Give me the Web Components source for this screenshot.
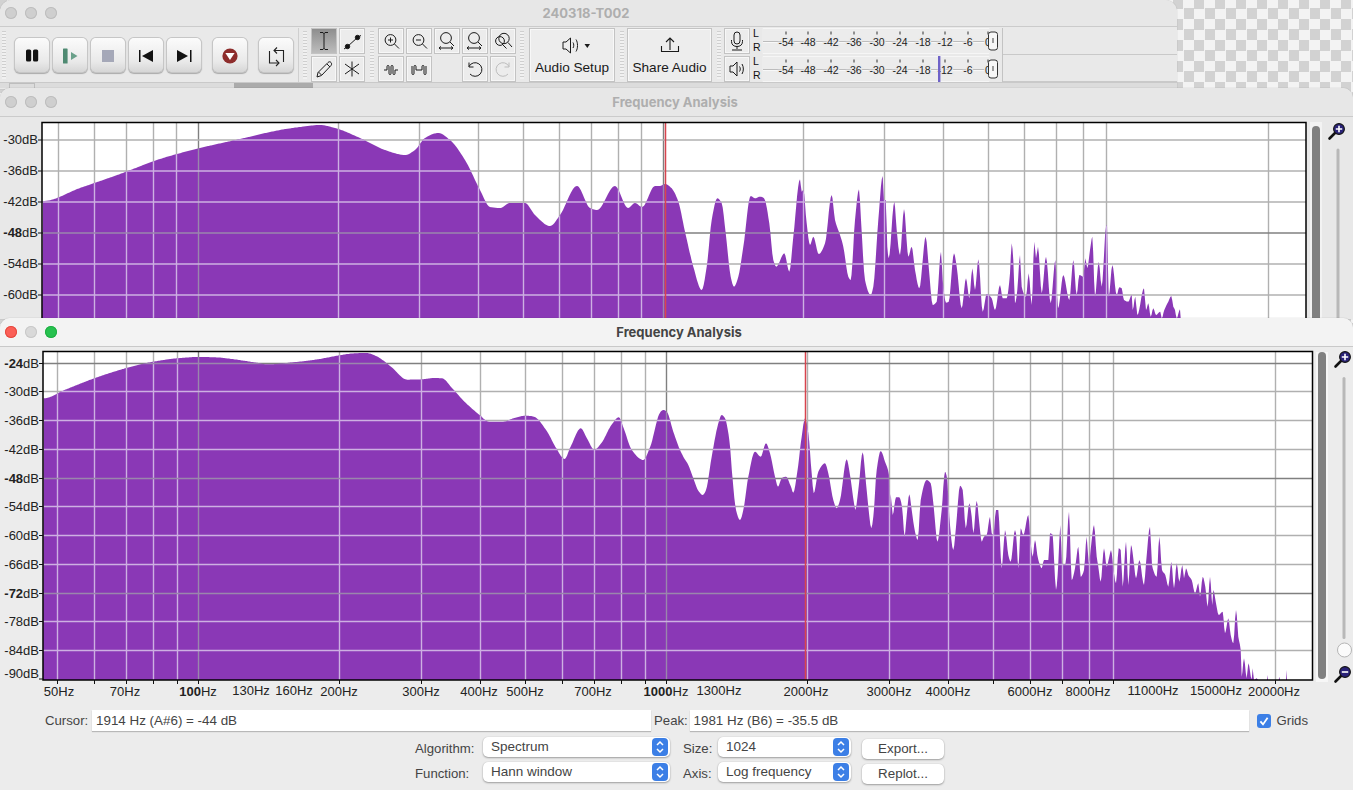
<!DOCTYPE html>
<html>
<head>
<meta charset="utf-8">
<title>Frequency Analysis</title>
<style>
  html, body { margin: 0; padding: 0; height: 790px; overflow: hidden; }
  body { font-family: "Liberation Sans", sans-serif; }
</style>
</head>
<body>
<app-desktop>
  <mac-window style="left:0;top:0;width:1177px;height:89px;z-index:1" label="240318-T002" tone="back" bar="27" shift="-62" corners="12px 12px 0 0">
    <project-toolbar></project-toolbar>
  </mac-window>
  <mac-window style="left:0;top:88px;width:1353px;height:231px;z-index:2" label="Frequency Analysis" tone="back" bar="29" shift="-60" corners="10px 10px 0 0">
    <div style="display:flex;align-items:flex-start">
      <spectrum-plot set="upper"></spectrum-plot>
      <zoom-rail set="upper"></zoom-rail>
    </div>
  </mac-window>
  <mac-window style="left:0;top:318px;width:1353px;height:472px;z-index:3" label="Frequency Analysis" tone="front" bar="29" shift="-52" corners="10px 10px 0 0">
    <div style="display:flex;align-items:flex-start">
      <spectrum-plot set="lower"></spectrum-plot>
      <zoom-rail set="lower"></zoom-rail>
    </div>
    <freq-controls></freq-controls>
  </mac-window>
</app-desktop>

<script>
  const ICONS = {
    zoomin: '<circle cx="12.5" cy="12" r="5.4"/><path d="M16.5 16l4.5 4.5M10 12h5M12.5 9.5v5"/>',
    zoomout: '<circle cx="12.5" cy="12" r="5.4"/><path d="M16.5 16l4.5 4.5M10 12h5"/>',
    fitsel: '<circle cx="12" cy="10" r="5.4"/><path d="M16 14l4 4M5 20h14M5 20l2-1.6M5 20l2 1.6M19 20l-2-1.6M19 20l-2 1.6"/>',
    fitproj: '<circle cx="12" cy="10" r="5.4"/><path d="M16 14l4 4M5 20h14M5 20l2-1.6M5 20l2 1.6M19 20l-2-1.6M19 20l-2 1.6"/>',
    zoomtoggle: '<circle cx="14" cy="10.5" r="5.2"/><circle cx="10" cy="13" r="4.4"/><path d="M18 14.5l4 4.5M13 17l3.5 3.5"/>',
    ibeam: '<path d="M13 5v16M9 4.5h3l1 1 1-1h3M9 21.5h3l1-1 1 1h3"/>',
    envelope: '<path d="M5 21l3-2 11-10 3-1.5"/><circle cx="8.5" cy="18.5" r="2.2" fill="#111"/><circle cx="18.5" cy="9.5" r="2.2" fill="#111"/>',
    pencil: '<path d="M6 21l1-4.5L17 6.5c1-1 2.2-1 3 0s.8 2 0 3L10.5 19.5z M7.5 16l3 3 M16 8l3 3"/>',
    multi: '<path d="M13 5.5v15M6 8l14 10M20 8L6 18"/>',
    silence: '<path d="M6 14H9V10.5a1 1 0 0 1 2 0V17.5a1 1 0 0 0 2 0V10.5a1 1 0 0 1 2 0V17.5a1 1 0 0 0 2 0V14H20"/>',
    trim: '<path d="M6 10V17.5a1 1 0 0 0 2 0V10.5a1 1 0 0 1 2 0V14H16V10.5a1 1 0 0 1 2 0V17.5a1 1 0 0 0 2 0V10"/>',
    undo: '<path d="M8 18a6.8 6.8 0 1 0-1-7.5M7 6.5v4.5h4.5" />',
    redo: '<path d="M18 18a6.8 6.8 0 1 1 1-7.5M19 6.5v4.5h-4.5" />',
    mic: '<rect x="10" y="4" width="6" height="12" rx="3"/><path d="M7.5 12v1.5c0 3.4 2.4 5 5.5 5s5.5-1.6 5.5-5V12M13 18.5V21M8 22h10"/>',
    speaker: '<path d="M6 10h3l4-4v14l-4-4H6zM15.5 10.5c1 1.5 1 3.5 0 5M18 8c1.8 3 1.8 7 0 10"/>'
  };

  const TRANSPORT = {
    pause: '<rect x="11" y="11.5" width="5.2" height="12" rx="1.6" fill="#111"/><rect x="18" y="11.5" width="5.2" height="12" rx="1.6" fill="#111"/>',
    play: '<rect x="10" y="10.5" width="4.6" height="15" rx=".6" fill="#4f8a72"/><path d="M18 14l6.5 4-6.5 4z" fill="#6aa08a"/>',
    stop: '<rect x="11" y="12" width="12" height="12" fill="#a5a8b8"/>',
    start: '<rect x="10" y="12" width="1.5" height="12" fill="#111"/><path d="M24 12v12l-11-6z" fill="#111"/>',
    end: '<rect x="23" y="12" width="1.5" height="12" fill="#111"/><path d="M10 12v12l11-6z" fill="#111"/>',
    record: '<circle cx="17" cy="18" r="7.6" fill="#8e2d2c"/><path d="M12.4 15.1h9.2L17 21.9z" fill="#fff"/>',
    loop: '<path d="M15 12.5h9.5V24M10.5 13v12H20" fill="none" stroke="#222" stroke-width="1.1"/><path d="M18 9.5l-3 3 3 3M17 22l3 3-3 3" fill="none" stroke="#222" stroke-width="1.1"/>'
  };

  class AppDesktop extends HTMLElement {
    constructor() {
      super();
      this.attachShadow({ mode: "open" });
      this.shadowRoot.innerHTML = `
        <style>
          :host {
            display: block;
            position: relative;
            width: 1353px;
            height: 790px;
            overflow: hidden;
            background: conic-gradient(#f3f3f3 25%, #d2d2d2 0 50%, #f3f3f3 0 75%, #d2d2d2 0) -3px -2px / 21px 21px;
          }
        </style>
        <slot></slot>`;
    }
  }

  class TrafficLights extends HTMLElement {
    constructor() {
      super();
      this.attachShadow({ mode: "open" });
    }
    connectedCallback() {
      const live = this.hasAttribute("live");
      this.shadowRoot.innerHTML = `
        <style>
          :host { display: flex; gap: 8px; align-items: center; }
          i { display: block; width: 12px; height: 12px; border-radius: 50%; background: #cfcfcf; box-shadow: inset 0 0 0 1px #bdbdbd; }
          .r { background: ${live ? "#fb5f57" : "#cfcfcf"}; box-shadow: inset 0 0 0 1px ${live ? "#e4493f" : "#bdbdbd"}; }
          .y { background: ${live ? "#d9d9d9" : "#cfcfcf"}; box-shadow: inset 0 0 0 1px ${live ? "#c8c8c8" : "#bdbdbd"}; }
          .g { background: ${live ? "#27c14f" : "#cfcfcf"}; box-shadow: inset 0 0 0 1px ${live ? "#1fae42" : "#bdbdbd"}; }
        </style>
        <i class="r"></i><i class="y"></i><i class="g"></i>`;
    }
  }

  class MacWindow extends HTMLElement {
    constructor() {
      super();
      this.attachShadow({ mode: "open" });
    }
    connectedCallback() {
      const front = this.getAttribute("tone") === "front";
      this.shadowRoot.innerHTML = `
        <style>
          :host {
            display: block;
            position: absolute;
            overflow: hidden;
            box-sizing: border-box;
            background: ${front ? "#ececec" : "#e8e8e8"};
            border-radius: ${this.getAttribute("corners")};
            box-shadow: 0 0 1px rgba(0,0,0,.35);
          }
          header {
            height: ${this.getAttribute("bar")}px;
            box-sizing: border-box;
            display: flex;
            align-items: center;
            padding-left: 5px;
            background: ${front ? "#f3f3f3" : "#e7e7e7"};
            border-bottom: 1px solid ${front ? "#c9c9c9" : "#cbcbcb"};
          }
          h1 {
            flex: 1;
            margin: 0 0 0 ${this.getAttribute("shift")}px;
            text-align: center;
            font: bold 13px "Inter", "Liberation Sans", sans-serif;
            color: ${front ? "#444" : "#aeaeae"};
          }
        </style>
        <header>
          <traffic-lights ${front ? "live" : ""}></traffic-lights>
          <h1>${this.getAttribute("label")}</h1>
        </header>
        <slot></slot>`;
    }
  }

  class GripBar extends HTMLElement {
    constructor() {
      super();
      this.attachShadow({ mode: "open" });
      this.shadowRoot.innerHTML = `
        <style>
          :host {
            display: block;
            width: 4px;
            height: 48px;
            align-self: center;
            background: repeating-linear-gradient(#cfcfcf 0 1px, #f1f1f1 1px 3px);
          }
        </style>`;
    }
  }

  class TransportBtn extends HTMLElement {
    constructor() {
      super();
      this.attachShadow({ mode: "open" });
    }
    connectedCallback() {
      this.shadowRoot.innerHTML = `
        <style>
          :host {
            display: block;
            width: 34px;
            height: 34px;
            border-radius: 5px;
            background: linear-gradient(#fbfbfb, #e9e9e9 70%, #d6d6d6);
            box-shadow: 0 0 0 1px #c6c6c6, 0 1px 1px 1px #aaa;
          }
          svg { display: block; }
        </style>
        <svg width="34" height="34" viewBox="0 0 34 34">${TRANSPORT[this.getAttribute("icon")]}</svg>`;
    }
  }

  class ToolBtn extends HTMLElement {
    constructor() {
      super();
      this.attachShadow({ mode: "open" });
    }
    connectedCallback() {
      const pressed = this.hasAttribute("pressed");
      const off = this.hasAttribute("off");
      this.shadowRoot.innerHTML = `
        <style>
          :host {
            display: block;
            width: 26px;
            height: 26px;
            box-sizing: border-box;
            border: 1px solid #c3c3c3;
            background: ${pressed ? "linear-gradient(#8e8e8e, #bdbdbd)" : "#ececec"};
            box-shadow: inset 0 0 0 1px ${pressed ? "transparent" : "#f7f7f7"};
          }
          svg { display: block; margin: -1px; fill: none; stroke: ${off ? "#bdbdbd" : "#1a1a1a"}; stroke-width: 1; }
        </style>
        <svg width="26" height="26" viewBox="0 0 26 26">${ICONS[this.getAttribute("icon")]}</svg>`;
    }
  }

  class LevelMeter extends HTMLElement {
    constructor() {
      super();
      this.attachShadow({ mode: "open" });
    }
    connectedCallback() {
      const marks = [[-54,786],[-48,808],[-42,831],[-36,854],[-30,877],[-24,900],[-18,923],[-12,945],[-6,968],[0,988]];
      const ox = 753;
      let ticks = "";
      marks.forEach(([v, x]) => {
        ticks += `<path d="M${x-ox} 3.5v3" stroke="#333" stroke-width="1"/>`;
        ticks += `<text x="${x-ox}" y="17.5" text-anchor="middle">${v}</text>`;
      });
      const needle = this.hasAttribute("needle") ? `<rect x="${939-ox-1}" y="0" width="2.4" height="26" fill="#6e62c8"/>` : "";
      this.shadowRoot.innerHTML = `
        <style>
          :host { display: block; width: 247px; height: 26px; }
          svg { display: block; }
          text { font: 10.5px "Liberation Sans", sans-serif; fill: #222; stroke: #e9e9e9; stroke-width: 2.5px; paint-order: stroke; }
          .lr { stroke: none; font-size: 10.5px; fill: #111; }
        </style>
        <svg width="247" height="26" viewBox="0 0 247 26">
          <rect x="9" y="0" width="228" height="26" fill="#ececec"/>
          <path d="M10 .5h226M10 25.5h226" stroke="#f6f6f6"/>
          <path d="M10 13.5h226" stroke="#bcbcbc"/>
          <path d="M10 14.5h226" stroke="#f8f8f8"/>
          <text class="lr" x="0" y="9">L</text>
          <text class="lr" x="0" y="23">R</text>
          ${ticks}
          ${needle}
          <rect x="235.5" y="4" width="9" height="18" rx="2.5" fill="#f6f6f6" stroke="#333" stroke-width="1"/>
          <path d="M240 10v5" stroke="#777" stroke-width="1.4"/>
        </svg>`;
    }
  }

  class ProjectToolbar extends HTMLElement {
    constructor() {
      super();
      this.attachShadow({ mode: "open" });
      this.shadowRoot.innerHTML = `
        <style>
          :host { display: block; height: 61px; }
          .row { display: flex; height: 56px; border-bottom: 1px solid #c9c9c9; box-sizing: border-box; padding-top: 1px; background: #e9e9e9; }
          .transport { display: flex; gap: 4px; align-items: center; margin: 2px 0 0 9px; height: 49px; }
          .grid { display: grid; grid-template-columns: repeat(2, 26px); grid-auto-rows: 26px; gap: 2px; }
          .five { grid-template-columns: repeat(5, 26px); }
          .blank { width: 26px; height: 26px; }
          .big {
            box-sizing: border-box;
            height: 54px;
            border: 1px solid #c3c3c3;
            background: #ededed;
            box-shadow: inset 0 0 0 1px #f8f8f8;
            display: flex;
            flex-direction: column;
            align-items: center;
            font-size: 13.6px;
            color: #1a1a1a;
          }
          .big svg { fill: none; stroke: #1a1a1a; stroke-width: 1; display: block; }
          .meters { display: grid; grid-auto-rows: 26px; gap: 2px; }
          .rest { flex: 1; margin-left: 2px; border-left: 1px solid #c3c3c3; display: flex; flex-direction: column; }
          .rest i { display: block; height: 27px; border-bottom: 1px solid #c9c9c9; box-sizing: border-box; }
          .sep { width: 1px; height: 54px; background: #cfcfcf; margin-left: 5px; }
          .bottom { height: 5px; background: #dcdcdc; display: flex; }
          .stub { width: 26px; height: 5px; margin-left: 9px; box-sizing: border-box; border: 1px solid #bdbdbd; border-bottom: 0; }
          .thumb { width: 79px; height: 5px; margin-left: 199px; background: #ababab; }
        </style>
        <div class="row">
          <grip-bar style="margin-left:2px"></grip-bar>
          <div class="transport">
            <transport-btn icon="pause"></transport-btn>
            <transport-btn icon="play"></transport-btn>
            <transport-btn icon="stop"></transport-btn>
            <transport-btn icon="start"></transport-btn>
            <transport-btn icon="end"></transport-btn>
            <transport-btn icon="record" style="margin-left:8px"></transport-btn>
            <transport-btn icon="loop" style="margin-left:8px"></transport-btn>
          </div>
          <div class="sep"></div>
          <grip-bar style="margin-left:4px"></grip-bar>
          <div class="grid" style="margin-left:4px">
            <tool-btn icon="ibeam" pressed></tool-btn>
            <tool-btn icon="envelope"></tool-btn>
            <tool-btn icon="pencil"></tool-btn>
            <tool-btn icon="multi"></tool-btn>
          </div>
          <grip-bar style="margin-left:5px"></grip-bar>
          <div class="grid five" style="margin-left:4px">
            <tool-btn icon="zoomin"></tool-btn>
            <tool-btn icon="zoomout"></tool-btn>
            <tool-btn icon="fitsel"></tool-btn>
            <tool-btn icon="fitproj"></tool-btn>
            <tool-btn icon="zoomtoggle"></tool-btn>
            <tool-btn icon="silence"></tool-btn>
            <tool-btn icon="trim"></tool-btn>
            <div class="blank"></div>
            <tool-btn icon="undo"></tool-btn>
            <tool-btn icon="redo" off></tool-btn>
          </div>
          <grip-bar style="margin-left:4px"></grip-bar>
          <div class="big" style="width:86px;margin-left:5px">
            <svg width="50" height="30" viewBox="0 0 50 30">
              <path d="M16 13h3l4.5-4v15L19 20h-3zM26 13.5c1 1.5 1 4 0 5.5M29 10.5c2 3 2 9 0 12"/>
              <path d="M37.5 15h5.5l-2.7 4z" fill="#1a1a1a" stroke="none"/>
            </svg>
            <span style="margin-top:1px">Audio Setup</span>
          </div>
          <grip-bar style="margin-left:5px"></grip-bar>
          <div class="big" style="width:85px;margin-left:3px">
            <svg width="40" height="31" viewBox="0 0 40 31">
              <path d="M20 21V9M16 13l4-4 4 4M11.5 17v5.5h17V17" stroke-width="1.1"/>
            </svg>
            <span>Share Audio</span>
          </div>
          <grip-bar style="margin-left:5px"></grip-bar>
          <div class="grid" style="grid-template-columns:26px;margin-left:3px">
            <tool-btn icon="mic"></tool-btn>
            <tool-btn icon="speaker"></tool-btn>
          </div>
          <div class="meters" style="margin-left:3px">
            <level-meter></level-meter>
            <level-meter needle></level-meter>
          </div>
          <div class="rest"><i></i><i></i></div>
        </div>
        <div class="bottom"><div class="stub"></div><div class="thumb"></div></div>`;
    }
  }

  // traces of the two spectra, in page pixels
  const scale = (pts, ox, oy, sx, sy) => pts.map(([x, y]) => [ox + x / sx, oy + y / sy]);

  // monotone cubic through the traced points, so peaks come out round and spikes don't overshoot
  const smooth = pts => {
    const m = pts.map((p, i) => {
      if (i === 0 || i === pts.length - 1) return 0;
      const a = (p[1] - pts[i - 1][1]) / (p[0] - pts[i - 1][0]);
      const b = (pts[i + 1][1] - p[1]) / (pts[i + 1][0] - p[0]);
      return a * b <= 0 ? 0 : 2 * a * b / (a + b);
    });
    const out = [];
    for (let i = 0; i < pts.length - 1; i++) {
      const [x0, y0] = pts[i], [x1, y1] = pts[i + 1];
      const h = x1 - x0;
      const steps = Math.max(1, Math.ceil(h));
      for (let s = 0; s < steps; s++) {
        const t = s / steps, t2 = t * t, t3 = t2 * t;
        out.push([x0 + h * t,
          (2 * t3 - 3 * t2 + 1) * y0 + (t3 - 2 * t2 + t) * h * m[i] +
          (3 * t2 - 2 * t3) * y1 + (t3 - t2) * h * m[i + 1]]);
      }
    }
    out.push(pts[pts.length - 1]);
    return out;
  };

  const lowerTrace = [].concat(
    scale([[9,160],[60,135],[133,100],[209,70],[278,50],[335,40],[388,36],[430,37],[470,42],[530,53],[558,58],[620,52],[680,43],[733,31],[770,25],[800,24],[825,34],[860,65],[900,104],[935,103],[965,99],[985,100],[1010,130],[1040,170],[1077,210],[1100,230],[1135,230],[1160,220],[1190,212],[1210,215],[1240,255],[1265,310],[1285,342],[1300,305],[1325,250],[1340,280],[1358,314],[1375,295],[1400,240],[1418,217],[1430,250],[1450,315],[1478,345],[1495,305]], 40, 345, 2.45, 3),
    scale([[0,38],[10,30],[20,35],[40,95],[60,150],[70,170],[85,195],[100,235],[115,272],[128,285],[138,270],[155,170],[175,70],[185,45],[195,55],[208,120],[218,240],[228,330],[240,360],[250,330],[265,230],[285,155],[302,170],[318,130],[330,160],[345,230],[354,260],[365,235],[378,230],[392,258],[400,278],[412,215],[425,110],[435,55],[445,100],[455,220],[461,280],[475,215],[495,190],[505,220],[520,300],[530,325],[540,300],[560,178],[570,225],[582,310],[586,330],[595,270],[608,157],[618,250],[625,320],[634,385],[640,350],[650,210],[662,153],[675,185],[687,225],[690,350],[692,282],[698,345],[708,292],[718,292],[726,320],[734,410],[738,370],[748,283],[755,330],[765,395],[773,420],[782,300],[800,240],[812,250],[822,330],[832,425],[845,330],[855,215],[862,240],[868,350],[880,450],[888,380],[900,257],[908,270],[917,385],[928,310],[935,350],[940,400],[950,302],[958,370],[965,425],[972,410],[980,405],[990,350]], 660, 400, 3, 3),
    scale([[35,100],[40,105],[48,30],[55,30],[60,120],[65,205],[72,120],[75,90],[85,165],[92,185],[105,90],[108,100],[115,205],[122,85],[130,105],[145,45],[152,130],[158,170],[165,120],[172,165],[178,190],[185,205],[192,180],[205,180],[210,100],[218,105],[222,175],[228,270],[235,190],[241,75],[246,190],[256,195],[267,35],[275,240],[285,205],[295,140],[302,230],[312,210],[320,110],[326,190],[335,120],[342,75],[350,170],[355,200],[362,245],[372,145],[380,200],[388,170],[393,150],[400,205],[408,250],[416,145],[422,150],[428,260],[438,125],[445,255],[453,135],[460,175],[468,235],[478,180],[492,255],[498,190],[510,80],[516,195],[530,230],[538,110],[546,210],[556,225],[565,260],[574,185],[582,265],[590,190],[598,245],[607,195],[612,235],[618,205],[625,225],[635,240],[645,280],[655,250],[660,290],[668,230],[676,260],[683,320],[690,230],[697,315],[700,270],[708,310],[716,345],[728,335],[735,400],[745,355],[752,405],[760,430],[768,330],[775,410],[782,450],[785,530],[792,475],[800,535],[805,490],[815,538],[818,505],[822,540],[830,535],[835,540],[861,540],[862,525],[864,540],[896,540],[898,530],[900,540],[918,540],[919,510],[921,540]], 980, 500, 3, 3)
  );

  const upperTrace = [].concat(
    [[43,201],[80,188],[120,174],[160,159],[200,148],[240,139],[280,130],[300,127],[320,125],[335,128],[360,138],[385,150],[405,155],[415,150],[425,138],[438,133],[450,140],[465,160],[480,190],[490,207],[500,208],[510,203],[525,203],[535,215],[550,226],[560,215],[577,186],[590,208],[597,210],[615,186],[628,208],[635,203],[642,207],[655,186]],
    scale([[0,198],[15,192],[35,205],[55,245],[75,335],[100,440],[125,510],[140,440],[155,300],[172,235],[185,250],[197,340],[212,470],[222,500],[235,470],[250,380],[272,228],[285,235],[300,230],[312,235],[328,310],[340,420],[349,440],[373,400],[388,455],[400,350],[420,178],[425,215],[430,210],[440,310],[450,375],[460,350],[476,402],[495,370],[515,225],[525,300],[540,345],[550,380],[565,470],[572,480],[585,300],[597,208],[603,300],[615,480],[632,525],[640,500],[655,300],[668,168],[672,240],[677,240],[682,380],[686,415],[703,245],[710,330],[720,405],[732,267],[745,410],[755,380],[765,450],[778,505],[797,350],[806,440],[818,555],[830,545],[843,395],[848,480],[858,548],[866,545],[882,400],[890,440],[905,565],[918,475],[928,535],[937,445],[945,510],[955,418],[968,575],[980,522],[995,535],[1005,570],[1020,495]], 660, 120, 3, 3),
    scale([[68,325],[80,325],[90,250],[95,160],[100,210],[105,340],[112,300],[120,195],[125,290],[138,320],[146,250],[155,345],[163,155],[168,205],[174,170],[185,310],[198,200],[212,340],[226,210],[234,355],[250,255],[268,330],[280,210],[290,315],[298,255],[310,260],[316,205],[322,235],[330,180],[337,140],[345,320],[356,215],[365,290],[378,110],[381,105],[386,320],[397,225],[410,315],[418,292],[425,295],[432,330],[445,335],[455,315],[458,360],[466,320],[472,375],[492,295],[498,360],[505,340],[512,380],[520,355],[528,375],[541,365],[545,385],[553,360],[565,335],[574,318],[580,350],[585,360],[590,385],[600,358],[602,385]], 980, 190, 3, 3)
  );

  const GRID_FREQS = [50,60,70,80,90,100,200,300,400,500,600,700,800,900,1000,2000,3000,4000,5000,6000,7000,8000,9000,20000];

  const PLOTS = {
    upper: {
      width: 1310, oy: 117, height: 202, left: 42, top: 122.5, right: 1306, bottom: 330,
      f100: 197.6, decade: 465, cursor: 665.5, trace: upperTrace,
      db: [[-30,140,0],[-36,171,0],[-42,202,0],[-48,233,1],[-54,264,0],[-60,295,0]],
      freq: []
    },
    lower: {
      width: 1316, oy: 347, height: 357, left: 43, top: 351.5, right: 1312.5, bottom: 680,
      f100: 198, decade: 468, cursor: 805.5, trace: lowerTrace,
      db: [[-24,363.5,1],[-30,391.5,0],[-36,420.5,0],[-42,449.5,0],[-48,478.5,1],[-54,506.5,0],[-60,535.5,0],[-66,564.5,0],[-72,593.5,1],[-78,621.5,0],[-84,650.5,0],[-90,679,0]],
      freq: [[50,59,0],[70,125,0],[100,198,2],[130,251,1],[160,294,1],[200,339,0],[300,421,0],[400,479,0],[500,525,0],[700,593,0],[1000,666,2],[1300,719,1],[2000,806,0],[3000,889,0],[4000,948,0],[6000,1030,0],[8000,1088,0],[11000,1153,1],[15000,1216,1],[20000,1274,0]]
    }
  };

  class SpectrumPlot extends HTMLElement {
    constructor() {
      super();
      this.attachShadow({ mode: "open" });
    }
    connectedCallback() {
      const p = PLOTS[this.getAttribute("set")];
      const xOf = f => Math.round(p.f100 + p.decade * Math.log10(f / 100)) + 0.5;
      const curve = smooth(p.trace);
      const last = curve[curve.length - 1][0].toFixed(1);
      const poly = `${p.left},${p.bottom} ` + curve.map(([x, y]) => `${x.toFixed(1)},${y.toFixed(1)}`).join(" ") + ` ${last},${p.bottom}`;

      let light = "", dark = "", ticks = "", labels = "";
      GRID_FREQS.forEach(f => {
        const x = xOf(f);
        const major = f === 100 || f === 1000;
        const line = `x1="${x}" x2="${x}" y1="${p.top}" y2="${p.bottom}"`;
        light += `<line ${line} stroke="${major ? "#808080" : "#b0b0b0"}"/>`;
        dark += `<line ${line} stroke="${major ? "#9a86ac" : "#cdb0e2"}"/>`;
        ticks += `<path d="M${x} ${p.bottom}v4" stroke="#111"/>`;
      });
      p.db.forEach(([v, y, major]) => {
        if (v !== -90) {
          const line = `x1="${p.left}" x2="${p.right}" y1="${y}" y2="${y}"`;
          light += `<line ${line} stroke="${major ? "#808080" : "#b0b0b0"}"/>`;
          dark += `<line ${line} stroke="${major ? "#9a86ac" : "#cdb0e2"}"/>`;
        }
        const ly = v === -90 ? 677.5 : y + 4;
        const tick = v === -90 ? 679 : y;
        ticks += `<path d="M${p.left - 4} ${tick}h4" stroke="#111"/>`;
        labels += `<text x="${p.left - 4}" y="${ly}" text-anchor="end">${major ? `<tspan font-weight="bold">${v}</tspan>dB` : `${v}dB`}</text>`;
      });
      p.freq.forEach(([f, x, kind]) => {
        const y = kind === 1 ? 694.5 : 696;
        const size = kind === 1 ? ' font-size="11.7"' : "";
        labels += `<text x="${x}" y="${y}" text-anchor="middle"${size}>${kind === 2 ? `<tspan font-weight="bold">${f}</tspan>Hz` : `${f}Hz`}</text>`;
      });

      this.shadowRoot.innerHTML = `
        <style>
          :host { display: block; width: ${p.width}px; height: ${p.height}px; }
          svg { display: block; }
          text { font: 13px "Liberation Sans", sans-serif; fill: #222; }
        </style>
        <svg width="${p.width}" height="${p.height}" viewBox="0 ${p.oy} ${p.width} ${p.height}">
          <defs><clipPath id="area"><polygon points="${poly}"/></clipPath></defs>
          <rect x="${p.left}" y="${p.top}" width="${p.right - p.left}" height="${p.bottom - p.top}" fill="#fff"/>
          <g stroke-width="1.4">${light}</g>
          <polygon points="${poly}" fill="#8a38b6"/>
          <g stroke-width="1.4" clip-path="url(#area)">${dark}</g>
          <line x1="${p.cursor}" x2="${p.cursor}" y1="${p.top}" y2="${p.bottom}" stroke="#d8444e" stroke-width="1.5"/>
          <rect x="${p.left}" y="${p.top}" width="${p.right - p.left}" height="${p.bottom - p.top}" fill="none" stroke="#000" stroke-width="1.5"/>
          ${ticks}
          ${labels}
        </svg>`;
    }
  }

  class ZoomRail extends HTMLElement {
    constructor() {
      super();
      this.attachShadow({ mode: "open" });
    }
    connectedCallback() {
      const lens = (cx, cy, plus) => `
        <path d="M${cx - 3.5} ${cy + 3.5}l-6 6" stroke="#111" stroke-width="2.6" stroke-linecap="round"/>
        <circle cx="${cx}" cy="${cy}" r="5.4" fill="#2a2378" stroke="#111" stroke-width="1.1"/>
        <path d="M${cx - 3.2} ${cy}h6.4${plus ? `M${cx} ${cy - 3.2}v6.4` : ""}" stroke="#fff" stroke-width="1.6"/>`;
      if (this.getAttribute("set") === "upper") {
        this.shadowRoot.innerHTML = `
          <style>:host { display: block; width: 43px; height: 202px; } svg { display: block; }</style>
          <svg width="43" height="202" viewBox="1310 117 43 202">
            <rect x="1310" y="122" width="12" height="200" fill="#f3f3f3"/>
            <path d="M1312 330V130a4 4 0 0 1 8 0V330z" fill="#808080"/>
            <path d="M1336.5 330V150a1.5 1.5 0 0 1 3 0V330z" fill="#b8b8b8"/>
            ${lens(1339, 129, true)}
          </svg>`;
      } else {
        this.shadowRoot.innerHTML = `
          <style>:host { display: block; width: 37px; height: 357px; } svg { display: block; }</style>
          <svg width="37" height="357" viewBox="1316 347 37 357">
            <rect x="1316" y="352" width="12" height="330" fill="#f7f7f7"/>
            <rect x="1318" y="352" width="8" height="327" rx="4" fill="#808080"/>
            <rect x="1342.5" y="377" width="3" height="262" rx="1.5" fill="#b8b8b8"/>
            <circle cx="1344.5" cy="650" r="7" fill="#fbfbfb" stroke="#b5b5b5"/>
            ${lens(1345, 357, true)}
            ${lens(1345, 672, false)}
          </svg>`;
      }
    }
  }

  class SelectBox extends HTMLElement {
    constructor() {
      super();
      this.attachShadow({ mode: "open" });
      this.shadowRoot.innerHTML = `
        <style>
          :host {
            display: flex;
            align-items: center;
            box-sizing: border-box;
            height: 20px;
            padding: 0 2px 0 8px;
            border-radius: 5px;
            background: #fff;
            box-shadow: 0 1px 2px rgba(0,0,0,.32), 0 0 1px rgba(0,0,0,.2);
            font-size: 13.5px;
            color: #444;
          }
          span { flex: 1; position: relative; top: -1px; }
          i { display: block; width: 16px; height: 18px; border-radius: 4px; background: #3c7fe6; }
          svg { display: block; fill: none; stroke: #fff; stroke-width: 1.5; }
        </style>
        <span><slot></slot></span>
        <i><svg width="16" height="18" viewBox="0 0 16 18"><path d="M5 7l3-3 3 3M5 11l3 3 3-3"/></svg></i>`;
    }
  }

  class PushBtn extends HTMLElement {
    constructor() {
      super();
      this.attachShadow({ mode: "open" });
      this.shadowRoot.innerHTML = `
        <style>
          :host {
            display: flex;
            align-items: center;
            justify-content: center;
            width: 82px;
            height: 20px;
            border-radius: 5px;
            background: #fff;
            box-shadow: 0 1px 2px rgba(0,0,0,.32), 0 0 1px rgba(0,0,0,.2);
            font-size: 13.4px;
            color: #444;
          }
        </style>
        <slot></slot>`;
    }
  }

  class TextReadout extends HTMLElement {
    constructor() {
      super();
      this.attachShadow({ mode: "open" });
      this.shadowRoot.innerHTML = `
        <style>
          :host {
            display: flex;
            align-items: center;
            box-sizing: border-box;
            height: 21px;
            padding-left: 4px;
            background: #fff;
            box-shadow: 0 1px 1px rgba(0,0,0,.22);
            font-size: 13.4px;
            color: #444;
          }
        </style>
        <slot></slot>`;
    }
  }

  class FreqControls extends HTMLElement {
    constructor() {
      super();
      this.attachShadow({ mode: "open" });
      this.shadowRoot.innerHTML = `
        <style>
          :host { display: block; padding-top: 6px; font-size: 13.2px; color: #444; }
          .readouts { display: flex; align-items: center; height: 21px; }
          .readouts label { white-space: nowrap; }
          .check { display: block; width: 14px; height: 14px; border-radius: 3px; background: #3c7fe6; margin-left: 8px; }
          .check svg { display: block; fill: none; stroke: #fff; stroke-width: 1.8; }
          .row { display: flex; align-items: center; height: 20px; margin-left: 415px; }
          .row + .row { margin-top: 5px; }
          .lab1 { width: 62px; padding-top: 3px; }
          .lab2 { width: 29px; margin-left: 13px; padding-top: 3px; white-space: nowrap; }
          .sel1 { margin-left: 6px; width: 187px; }
          .sel2 { margin-left: 6px; width: 133px; }
          push-btn { margin: 3px 0 0 11px; }
        </style>
        <div class="readouts">
          <label style="margin-left:45px;width:47px">Cursor:</label>
          <text-readout style="width:559px">1914 Hz (A#6) = -44 dB</text-readout>
          <label style="margin-left:3px;width:35.5px">Peak:</label>
          <text-readout style="width:559px">1981 Hz (B6) = -35.5 dB</text-readout>
          <span class="check"><svg width="14" height="14" viewBox="0 0 14 14"><path d="M3.4 7.4l2.6 3 4.6-6.6"/></svg></span>
          <label style="margin-left:6px">Grids</label>
        </div>
        <div class="row" style="margin-top:6px">
          <label class="lab1">Algorithm:</label>
          <select-box class="sel1">Spectrum</select-box>
          <label class="lab2">Size:</label>
          <select-box class="sel2">1024</select-box>
          <push-btn>Export...</push-btn>
        </div>
        <div class="row">
          <label class="lab1">Function:</label>
          <select-box class="sel1">Hann window</select-box>
          <label class="lab2">Axis:</label>
          <select-box class="sel2">Log frequency</select-box>
          <push-btn>Replot...</push-btn>
        </div>`;
    }
  }

  customElements.define("app-desktop", AppDesktop);
  customElements.define("traffic-lights", TrafficLights);
  customElements.define("mac-window", MacWindow);
  customElements.define("grip-bar", GripBar);
  customElements.define("transport-btn", TransportBtn);
  customElements.define("tool-btn", ToolBtn);
  customElements.define("level-meter", LevelMeter);
  customElements.define("project-toolbar", ProjectToolbar);
  customElements.define("spectrum-plot", SpectrumPlot);
  customElements.define("zoom-rail", ZoomRail);
  customElements.define("select-box", SelectBox);
  customElements.define("push-btn", PushBtn);
  customElements.define("text-readout", TextReadout);
  customElements.define("freq-controls", FreqControls);
</script>
</body>
</html>
